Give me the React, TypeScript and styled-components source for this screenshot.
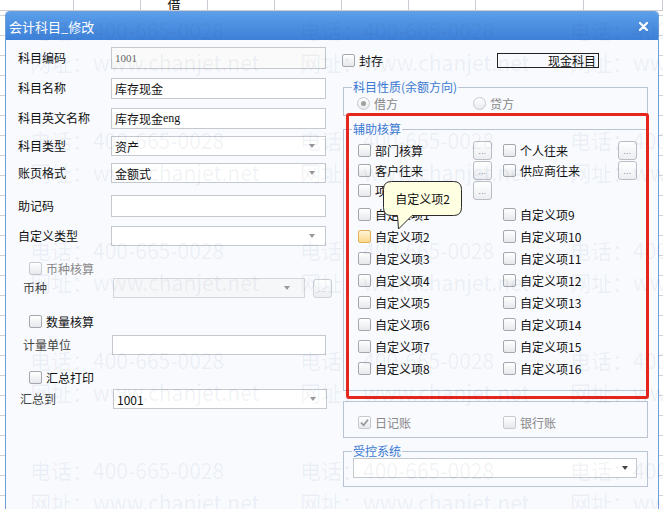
import React from 'react';
import styled, { createGlobalStyle } from 'styled-components';

/* ── Global ── */

const GlobalStyle = createGlobalStyle`
  html, body { margin: 0; padding: 0; }
  body {
    width: 663px;
    height: 509px;
    overflow: hidden;
    background: #fff;
    font-family: "Noto Sans CJK SC", "Microsoft YaHei", sans-serif;
    font-size: 12px;
    color: #111;
  }
`;

/* ── Sheet behind the dialog ── */

const Sheet = styled.div`
  position: relative;
  width: 663px;
  height: 509px;
  overflow: hidden;
  background-color: #fff;
  background-image: linear-gradient(#cfd3d9 1px, transparent 1px);
  background-size: 100% 20px;
  background-position: 0 15px;
`;

const SheetHead = styled.div`
  display: flex;
  height: 10px;
  border-bottom: 1px solid #c9cdd3;
  background: #fff;
`;

const SheetCell = styled.div<{ $w: number }>`
  width: ${p => p.$w}px;
  flex-shrink: 0;
  border-right: 1px solid #c9cdd3;
  box-sizing: border-box;
  display: flex;
  justify-content: center;
  align-items: flex-end;
  overflow: hidden;
  font-size: 13px;
  line-height: 13px;
  color: #111;
`;

/* ── Dialog window ── */

const Dialog = styled.div`
  position: absolute;
  left: 5px;
  top: 11px;
  width: 654px;
  height: 510px;
  box-sizing: border-box;
  border: 1px solid #6f9edb;
  border-radius: 4px 4px 0 0;
  background: #f8fafe;
  display: flex;
  flex-direction: column;
`;

const TitleBar = styled.div`
  height: 28px;
  flex-shrink: 0;
  display: flex;
  align-items: center;
  padding: 0 10px 0 3px;
  border-radius: 3px 3px 0 0;
  background: linear-gradient(#5b9ee9, #3d80d8);
  color: #fff;
  font-size: 13px;
`;

const CloseIcon = styled.svg`
  margin-left: auto;
  display: block;
`;

const Body = styled.div`
  flex: 1;
  display: flex;
`;

/* ── Left column ── */

const LeftCol = styled.div`
  width: 337px;
  flex-shrink: 0;
  box-sizing: border-box;
  padding: 7px 0 0 12px;
  display: flex;
  flex-direction: column;
`;

const FormRow = styled.div<{ $gap: number; $h: number }>`
  display: flex;
  align-items: center;
  margin-top: ${p => p.$gap}px;
  height: ${p => p.$h}px;
`;

const Label = styled.span<{ $muted?: boolean; $indent?: number }>`
  width: ${p => 93 - (p.$indent || 0)}px;
  padding-left: ${p => p.$indent || 0}px;
  flex-shrink: 0;
  color: ${p => (p.$muted ? '#444' : '#111')};
  margin-top: -2px;
  white-space: nowrap;
`;

const TextInput = styled.div<{ $w: number; $disabled?: boolean; $ml?: number }>`
  width: ${p => p.$w}px;
  margin-left: ${p => p.$ml || 0}px;
  height: 100%;
  box-sizing: border-box;
  border: 1px solid #c4c8cf;
  background: ${p => (p.$disabled ? '#fafafa' : '#fff')};
  display: flex;
  align-items: center;
  padding: 0 3px;
  color: #111;
`;

const SerifValue = styled.span`
  font-family: "Liberation Serif", "Noto Sans CJK SC", serif;
  font-size: 11px;
  color: #666;
`;

const EngText = styled.span`
  font-family: "Liberation Serif", serif;
  font-size: 12px;
`;

const Combo = styled.div<{ $w: number; $disabled?: boolean; $ml?: number }>`
  width: ${p => p.$w}px;
  margin-left: ${p => p.$ml || 0}px;
  height: 100%;
  box-sizing: border-box;
  border: 1px solid ${p => (p.$disabled ? '#d3d6db' : '#c4c8cf')};
  background: ${p => (p.$disabled ? '#f6f7f9' : '#fff')};
  display: flex;
  align-items: center;
  padding: 0 0 0 3px;
`;

const Arrow = styled.span<{ $dark?: boolean; $mr?: number }>`
  margin-left: auto;
  margin-right: ${p => p.$mr ?? 10}px;
  width: 0;
  height: 0;
  border-left: 3.5px solid transparent;
  border-right: 3.5px solid transparent;
  border-top: 4px solid ${p => (p.$dark ? '#444' : '#9a9a9a')};
`;

const DotsButton = styled.span<{ $disabled?: boolean; $mr?: number }>`
  width: 19px;
  height: 19px;
  flex-shrink: 0;
  margin-right: ${p => p.$mr || 0}px;
  box-sizing: border-box;
  border: 1px solid ${p => (p.$disabled ? '#d0d3d8' : '#b9bdc4')};
  border-radius: 3px;
  background: linear-gradient(#ffffff, #eceef2);
  display: flex;
  justify-content: center;
  align-items: center;
  padding-top: 3px;
  font-family: "Liberation Sans", sans-serif;
  font-size: 8px;
  letter-spacing: 0.5px;
  color: ${p => (p.$disabled ? '#aaa' : '#666')};
`;

/* ── Checkbox & radio ── */

const Box = styled.span<{ $disabled?: boolean; $hover?: boolean }>`
  width: 13px;
  height: 13px;
  flex-shrink: 0;
  box-sizing: border-box;
  border: 1px solid ${p => (p.$hover ? '#e0b15a' : p.$disabled ? '#c6c9ce' : '#a3a7ae')};
  border-radius: 2px;
  background: ${p =>
    p.$hover
      ? 'linear-gradient(#fff4d6, #fbd98c)'
      : 'linear-gradient(#ffffff, #e6e8eb)'};
  display: flex;
  align-items: center;
  justify-content: center;
`;

const Check = ({ checked, disabled, hover }: { checked?: boolean; disabled?: boolean; hover?: boolean }) => (
  <Box $disabled={disabled} $hover={hover}>
    {checked && (
      <svg width="9" height="9" viewBox="0 0 9 9">
        <path d="M1 4.6 L3.6 7.2 L8 1.6" fill="none" stroke={disabled ? '#9a9a9a' : '#333'} strokeWidth="1.7" />
      </svg>
    )}
  </Box>
);

const RadioCircle = styled.span`
  width: 13px;
  height: 13px;
  flex-shrink: 0;
  box-sizing: border-box;
  border: 1px solid #c6c9ce;
  border-radius: 50%;
  background: linear-gradient(#ffffff, #e8eaed);
  display: flex;
  align-items: center;
  justify-content: center;
`;

const RadioDot = styled.span`
  width: 5px;
  height: 5px;
  border-radius: 50%;
  background: #a0a0a0;
`;

const CheckLine = styled.label<{ $ml?: number; $muted?: boolean }>`
  display: flex;
  align-items: center;
  gap: 4px;
  margin-left: ${p => p.$ml || 0}px;
  color: ${p => (p.$muted ? '#888' : '#111')};
  white-space: nowrap;
`;

/* ── Right column ── */

const RightCol = styled.div`
  width: 305px;
  flex-shrink: 0;
  padding-top: 13px;
  display: flex;
  flex-direction: column;
`;

const TopRow = styled.div`
  height: 15px;
  display: flex;
  align-items: center;
`;

const ClassBox = styled.div`
  margin-left: auto;
  margin-right: 49px;
  width: 102px;
  height: 15px;
  box-sizing: border-box;
  border: 1px solid #222;
  display: flex;
  align-items: center;
  justify-content: flex-end;
  padding-right: 2px;
  font-size: 12px;
`;

const Group = styled.fieldset<{ $gap: number; $pt: number; $pb: number }>`
  margin: ${p => p.$gap}px 0 0 0;
  padding: ${p => p.$pt}px 0 ${p => p.$pb}px 8px;
  border: 1px solid #b9c3d1;
  min-width: 0;
`;

const GroupTitle = styled.legend`
  padding: 0 1px;
  line-height: 14px;
  font-size: 12px;
  color: #3b79d2;
`;

const RadioRow = styled.div`
  display: flex;
  align-items: center;
  height: 14px;
  margin-left: 5px;
`;

const AuxWrap = styled.div`
  position: relative;
  margin-top: 6px;
`;

const RedFrame = styled.div`
  position: absolute;
  top: -9px;
  left: 3px;
  right: -1px;
  bottom: -8px;
  border: 3px solid #e5261d;
  border-radius: 3px;
  pointer-events: none;
  z-index: 5;
`;

const AuxGrid = styled.div<{ $rowH: number; $mt?: number }>`
  display: grid;
  grid-template-columns: 134px 134px;
  column-gap: 11px;
  grid-auto-rows: ${p => p.$rowH}px;
  margin: ${p => p.$mt || 0}px 0 0 6px;
`;

const AuxItem = styled.div`
  position: relative;
  display: flex;
  align-items: center;
`;

const ItemLabel = styled.span`
  margin-left: 4px;
  color: #111;
  white-space: nowrap;
`;

const Push = styled.span`
  margin-left: auto;
`;

const BookRow = styled.div`
  display: grid;
  grid-template-columns: 134px 134px;
  column-gap: 11px;
  height: 14px;
  margin-left: 6px;
`;

const Tip = styled.div`
  position: absolute;
  left: 25px;
  top: -44px;
  width: 80px;
  height: 49px;
  z-index: 4;
`;

const TipShape = styled.svg`
  position: absolute;
  inset: 0;
`;

const TipText = styled.span`
  position: relative;
  display: flex;
  justify-content: center;
  align-items: center;
  width: 79px;
  height: 35px;
  font-size: 12px;
  color: #111;
`;

/* ── Watermark ── */

const Watermark = styled.div`
  position: absolute;
  inset: 0;
  z-index: 20;
  pointer-events: none;
  display: grid;
  grid-template-columns: repeat(3, 270px);
  grid-auto-rows: 110px;
  padding: 14px 0 0 30px;
  overflow: hidden;
`;

const MarkCell = styled.div`
  display: flex;
  flex-direction: column;
  font-size: 21px;
  line-height: 32px;
  color: rgba(40, 60, 110, 0.065);
  white-space: nowrap;
`;

/* ── Data ── */

const headCells: [number, string][] = [
  [74, ''], [67, ''], [67, '借'], [67, ''], [67, ''], [67, ''], [67, ''], [108, ''], [79, ''],
];

const custom = Array.from({ length: 8 }, (_, i) => i + 1);

export default function App() {
  return (
    <>
      <GlobalStyle />
      <Sheet>
        <SheetHead>
          {headCells.map(([w, t], i) => (
            <SheetCell key={i} $w={w}>{t}</SheetCell>
          ))}
        </SheetHead>

        <Dialog>
          <TitleBar>
            会计科目_修改
            <CloseIcon width="9" height="9" viewBox="0 0 9 9">
              <path d="M1 1 L8 8 M8 1 L1 8" stroke="#fff" strokeWidth="2.2" strokeLinecap="round" />
            </CloseIcon>
          </TitleBar>

          <Body>
            <LeftCol>
              <FormRow $gap={0} $h={22}>
                <Label>科目编码</Label>
                <TextInput $w={215} $disabled><SerifValue>1001</SerifValue></TextInput>
              </FormRow>
              <FormRow $gap={9} $h={21}>
                <Label>科目名称</Label>
                <TextInput $w={215}>库存现金</TextInput>
              </FormRow>
              <FormRow $gap={9} $h={21}>
                <Label>科目英文名称</Label>
                <TextInput $w={215}>库存现金<EngText>eng</EngText></TextInput>
              </FormRow>
              <FormRow $gap={7} $h={20}>
                <Label>科目类型</Label>
                <Combo $w={215}>资产<Arrow /></Combo>
              </FormRow>
              <FormRow $gap={7} $h={20}>
                <Label>账页格式</Label>
                <Combo $w={215}>金额式<Arrow /></Combo>
              </FormRow>
              <FormRow $gap={12} $h={22}>
                <Label>助记码</Label>
                <TextInput $w={215} />
              </FormRow>
              <FormRow $gap={9} $h={20}>
                <Label>自定义类型</Label>
                <Combo $w={215}><Arrow /></Combo>
              </FormRow>
              <FormRow $gap={15} $h={14}>
                <CheckLine $ml={11} $muted><Check disabled />币种核算</CheckLine>
              </FormRow>
              <FormRow $gap={3} $h={20}>
                <Label $indent={5} $muted>币种</Label>
                <Combo $w={192} $ml={2} $disabled><Arrow $mr={14} /></Combo>
                <Push />
                <DotsButton $disabled $mr={11}>...</DotsButton>
              </FormRow>
              <FormRow $gap={16} $h={14}>
                <CheckLine $ml={11}><Check />数量核算</CheckLine>
              </FormRow>
              <FormRow $gap={7} $h={20}>
                <Label $indent={5} $muted>计量单位</Label>
                <TextInput $w={214} $ml={1} />
              </FormRow>
              <FormRow $gap={15} $h={14}>
                <CheckLine $ml={11}><Check />汇总打印</CheckLine>
              </FormRow>
              <FormRow $gap={5} $h={20}>
                <Label $indent={2} $muted>汇总到</Label>
                <Combo $w={214} $ml={2}>1001<Arrow /></Combo>
              </FormRow>
            </LeftCol>

            <RightCol>
              <TopRow>
                <CheckLine $ml={-1}><Check />封存</CheckLine>
                <ClassBox>现金科目</ClassBox>
              </TopRow>

              <Group $gap={12} $pt={2} $pb={5}>
                <GroupTitle>科目性质(余额方向)</GroupTitle>
                <RadioRow>
                  <CheckLine $muted>
                    <RadioCircle><RadioDot /></RadioCircle>借方
                  </CheckLine>
                  <CheckLine $muted $ml={75}>
                    <RadioCircle />贷方
                  </CheckLine>
                </RadioRow>
              </Group>

              <AuxWrap>
                <RedFrame />
                <Group $gap={0} $pt={4} $pb={11}>
                  <GroupTitle>辅助核算</GroupTitle>
                  <AuxGrid $rowH={20}>
                    <AuxItem><Check /><ItemLabel>部门核算</ItemLabel><Push /><DotsButton>...</DotsButton></AuxItem>
                    <AuxItem><Check /><ItemLabel>个人往来</ItemLabel><Push /><DotsButton>...</DotsButton></AuxItem>
                    <AuxItem><Check /><ItemLabel>客户往来</ItemLabel><Push /><DotsButton>...</DotsButton></AuxItem>
                    <AuxItem><Check /><ItemLabel>供应商往来</ItemLabel><Push /><DotsButton>...</DotsButton></AuxItem>
                    <AuxItem><Check /><ItemLabel>项目核算</ItemLabel><Push /><DotsButton>...</DotsButton></AuxItem>
                    <AuxItem />
                  </AuxGrid>
                  <AuxGrid $rowH={22} $mt={3}>
                    {custom.map(n => (
                      <React.Fragment key={n}>
                        <AuxItem>
                          <Check hover={n === 2} />
                          <ItemLabel>自定义项{n}</ItemLabel>
                          {n === 2 && (
                            <Tip>
                              <TipShape width="80" height="49" viewBox="0 0 80 49">
                                <path
                                  d="M8.5 0.5 H70.5 Q78.5 0.5 78.5 8.5 V26.5 Q78.5 34.5 70.5 34.5 H29 L15.5 48 L14.5 34.5 H8.5 Q0.5 34.5 0.5 26.5 V8.5 Q0.5 0.5 8.5 0.5 Z"
                                  fill="#ffffe1"
                                  stroke="#2b2b2b"
                                  strokeWidth="1"
                                />
                              </TipShape>
                              <TipText>自定义项2</TipText>
                            </Tip>
                          )}
                        </AuxItem>
                        <AuxItem>
                          <Check />
                          <ItemLabel>自定义项{n + 8}</ItemLabel>
                        </AuxItem>
                      </React.Fragment>
                    ))}
                  </AuxGrid>
                </Group>
              </AuxWrap>

              <Group $gap={10} $pt={12} $pb={9}>
                <BookRow>
                  <CheckLine $muted><Check checked disabled />日记账</CheckLine>
                  <CheckLine $muted><Check disabled />银行账</CheckLine>
                </BookRow>
              </Group>

              <Group $gap={6} $pt={0} $pb={8}>
                <GroupTitle>受控系统</GroupTitle>
                <FormRow $gap={0} $h={20}>
                  <Combo $w={284} $ml={1}><Arrow $dark $mr={8} /></Combo>
                </FormRow>
              </Group>
            </RightCol>
          </Body>
        </Dialog>

        <Watermark>
          {Array.from({ length: 15 }, (_, i) => (
            <MarkCell key={i}>
              <span>电话：400-665-0028</span>
              <span>网址：www.chanjet.net</span>
            </MarkCell>
          ))}
        </Watermark>
      </Sheet>
    </>
  );
}
